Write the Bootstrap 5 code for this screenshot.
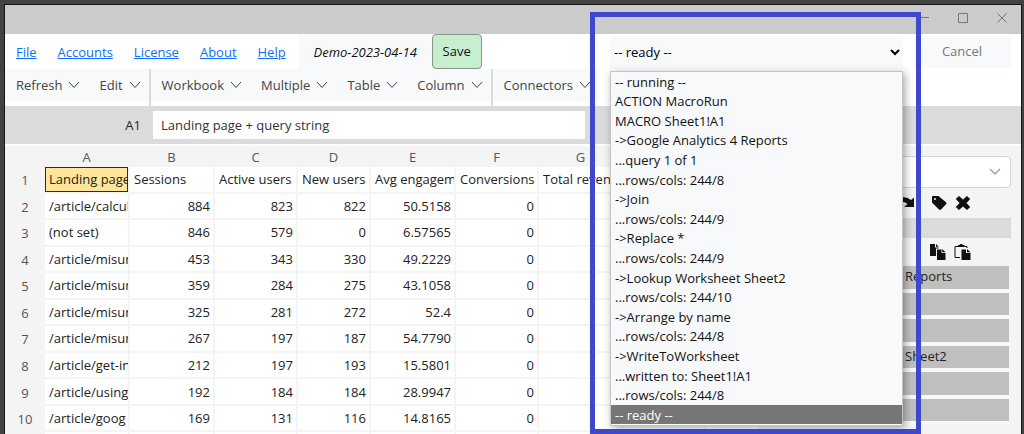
<!DOCTYPE html>
<html lang="en">
<head>
<meta charset="utf-8">
<meta name="viewport" content="width=device-width, initial-scale=1">
<title>Demo-2023-04-14</title>
<link rel="stylesheet" href="https://cdn.jsdelivr.net/npm/bootstrap@5.3.0/dist/css/bootstrap.min.css">
<style>
  body { background: #434240; font-family: "Open Sans", "Noto Sans", sans-serif; font-size: 13px; line-height: 20px; color: #222; height: 100vh; overflow: hidden; }
  .app-window { margin: 4px 2px 0 4px; border: 1px solid #161616; border-bottom: 0; background: #fff; height: calc(100vh - 4px); }
  .app-window > * { flex-shrink: 0; }
  .titlebar { height: 29px; background: #cbcbcb; padding: 0 14px 3px; gap: 29px; color: #777; }
  .topbar { height: 35px; }
  .topbar a { color: #0d6efd; }
  .menu-links { gap: 21px; padding: 0 13px 0 11px; }
  .doc-name { background: #f8f9fa; height: 35px; width: 133px; font-style: italic; color: #111; }
  .btn-save { width: 50px; height: 35px; font-size: 13px; padding: 0; background: #c6efce; border: 1px solid #8a938c; border-radius: 4px; color: #111; }
  .status-box { width: 293px; }
  .status-select { appearance: auto; width: 100%; height: 32px; border: 0; background: #f8f9fa; color: #000; padding: 0; font-size: 13px; }
  .status-menu { position: absolute; z-index: 5; top: 35px; left: 0; right: 0; height: 355px; background: #f8f9fa; border: 1px solid #c4c4c4; box-shadow: 2px 2px 8px rgba(0,0,0,.35); color: #111; line-height: 21px; }
  .status-menu li { flex: 1 1 0; min-height: 0; padding: 0 4px; }
  .status-menu .chosen { background: #767676; color: #fff; }
  .highlight-frame { position: absolute; z-index: 6; top: -24px; left: -20px; right: -18px; height: 422px; border: 5px solid #3f48cc; pointer-events: none; }
  .btn-cancel { width: 98px; height: 32px; font-size: 13px; padding: 0; border: 0; border-radius: 4px; background: #f8f9fa; color: #777; margin: 0 10px; }
  .toolbar { height: 37px; }
  .tool-group { padding-bottom: 5px; border-right: 2px solid #dbdbdb; }
  .tool-group:last-child { border: 0; }
  .tool-group button { border: 0; background: #f8f9fa; color: #444; padding: 0 8px 0 11px; gap: 6px; }
  .formula { height: 38px; background: #dbdbdb; padding: 5px 0; border: 0; }
  .formula label { width: 148px; padding-right: 12px; }
  .formula input { width: 432px; border: 0; padding: 0 8px; color: #333; }
  .workarea { background: #f4f4f4; border-top: 2px solid #fff; flex: 1 1 0; min-height: 0; }
  .sheet { table-layout: fixed; width: 755px; height: 313px; border-collapse: separate; border-spacing: 0; }
  .sheet th { font-weight: 400; text-align: center; color: #555; padding: 0; }
  .sheet thead th { height: 21px; padding-right: 2px; }
  .sheet tbody tr { height: 26px; }
  .sheet td { background: #fff; border: 0 solid #f4f4f4; border-width: 0 2px 2px 0; padding: 0 3px 0 4px; overflow: hidden; white-space: nowrap; text-align: right; }
  .sheet td.txt { text-align: left; padding-right: 0; }
  .sheet td.active-cell { background: #ffe699; background-clip: padding-box; box-shadow: inset 0 0 0 1px #1414e0; }
  .panel { padding: 10px 10px 0 0; }
  .panel-select { height: 32px; font-size: 13px; border: 1px solid #ced4da; border-radius: 4px; background-image: url("data:image/svg+xml,%3Csvg xmlns='http://www.w3.org/2000/svg' viewBox='0 0 12 12'%3E%3Cpath d='M1 3 6 8 11 3' fill='none' stroke='%23a0a4a8' stroke-width='1.500'/%3E%3C/svg%3E"); background-size: 12px; background-position: right 9px center; }
  .icon-row { height: 30px; padding-right: 40px; gap: 8px; }
  .icon-row.edit { height: 28px; }
  .icon-row button { border: 0; background: none; padding: 0; color: #111; line-height: 0; }
  .bar-strip { height: 20px; background: #dbdbdb; }
  .steps { height: 159px; padding-right: 2px; }
  .steps li { flex: 1 1 0; background: #bfbfbf; border-bottom: 4px solid #f8f8f8; padding-left: 145px; }
</style>
</head>
<body>
<div class="app-window d-flex flex-column">
  <div class="titlebar d-flex justify-content-end align-items-center">
    <svg width="10" height="10" viewBox="0 0 10 10" stroke="currentColor"><path d="M0 4.500H10"/></svg>
    <svg width="10" height="10" viewBox="0 0 10 10" stroke="currentColor" fill="none"><path d="M.5.500H9.500V9.500H.500Z"/></svg>
    <svg width="10" height="10" viewBox="0 0 10 10" stroke="currentColor"><path d="M.5.500 9.500 9.500M9.500.500.500 9.500"/></svg>
  </div>

  <header class="topbar d-flex align-items-center">
    <nav class="menu-links d-flex">
      <a href="#">File</a><a href="#">Accounts</a><a href="#">License</a><a href="#">About</a><a href="#">Help</a>
    </nav>
    <div class="doc-name d-flex align-items-center justify-content-center">Demo-2023-04-14</div>
    <button class="btn btn-save" type="button">Save</button>
    <div class="status-box position-relative ms-auto">
      <select class="status-select d-block" aria-label="Status"><option>-- ready --</option></select>
      <ul class="status-menu list-unstyled d-flex flex-column m-0">
        <li>-- running --</li>
        <li>ACTION MacroRun</li>
        <li>MACRO Sheet1!A1</li>
        <li>-&gt;Google Analytics 4 Reports</li>
        <li>...query 1 of 1</li>
        <li>...rows/cols: 244/8</li>
        <li>-&gt;Join</li>
        <li>...rows/cols: 244/9</li>
        <li>-&gt;Replace *</li>
        <li>...rows/cols: 244/9</li>
        <li>-&gt;Lookup Worksheet Sheet2</li>
        <li>...rows/cols: 244/10</li>
        <li>-&gt;Arrange by name</li>
        <li>...rows/cols: 244/8</li>
        <li>-&gt;WriteToWorksheet</li>
        <li>...written to: Sheet1!A1</li>
        <li>...rows/cols: 244/8</li>
        <li class="chosen">-- ready --</li>
      </ul>
      <div class="highlight-frame"></div>
    </div>
    <button class="btn btn-cancel" type="button">Cancel</button>
  </header>

  <div class="toolbar d-flex">
    <svg class="d-none"><symbol id="chev" viewBox="0 0 12 8"><path d="M1 1 6 6.500 11 1" fill="none" stroke="currentColor"/></symbol></svg>
    <div class="tool-group d-flex">
      <button class="d-flex align-items-center" type="button">Refresh<svg width="12" height="8"><use href="#chev"/></svg></button>
      <button class="d-flex align-items-center" type="button">Edit<svg width="12" height="8"><use href="#chev"/></svg></button>
    </div>
    <div class="tool-group d-flex">
      <button class="d-flex align-items-center" type="button">Workbook<svg width="12" height="8"><use href="#chev"/></svg></button>
      <button class="d-flex align-items-center" type="button">Multiple<svg width="12" height="8"><use href="#chev"/></svg></button>
      <button class="d-flex align-items-center" type="button">Table<svg width="12" height="8"><use href="#chev"/></svg></button>
      <button class="d-flex align-items-center" type="button">Column<svg width="12" height="8"><use href="#chev"/></svg></button>
    </div>
    <div class="tool-group d-flex">
      <button class="d-flex align-items-center" type="button">Connectors<svg width="12" height="8"><use href="#chev"/></svg></button>
    </div>
  </div>

  <div class="formula d-flex align-items-center">
    <label for="cell" class="text-end">A1</label>
    <input id="cell" class="h-100" type="text" value="Landing page + query string">
  </div>

  <main class="workarea d-flex overflow-hidden">
    <table class="sheet flex-shrink-0">
      <colgroup><col style="width:40px"><col style="width:85px"><col style="width:85px"><col style="width:83px"><col style="width:73px"><col style="width:85px"><col style="width:83px"><col style="width:85px"><col style="width:82px"><col></colgroup>
      <thead><tr><th></th><th>A</th><th>B</th><th>C</th><th>D</th><th>E</th><th>F</th><th>G</th><th></th><th></th></tr></thead>
      <tbody>
        <tr><th>1</th><td class="txt active-cell">Landing page</td><td class="txt">Sessions</td><td class="txt">Active users</td><td class="txt">New users</td><td class="txt">Avg engagement</td><td class="txt">Conversions</td><td class="txt">Total revenue</td><td></td><td></td></tr>
        <tr><th>2</th><td class="txt">/article/calculate</td><td>884</td><td>823</td><td>822</td><td>50.5158</td><td>0</td><td></td><td></td><td></td></tr>
        <tr><th>3</th><td class="txt">(not set)</td><td>846</td><td>579</td><td>0</td><td>6.57565</td><td>0</td><td></td><td></td><td></td></tr>
        <tr><th>4</th><td class="txt">/article/misunder</td><td>453</td><td>343</td><td>330</td><td>49.2229</td><td>0</td><td></td><td></td><td></td></tr>
        <tr><th>5</th><td class="txt">/article/misunder</td><td>359</td><td>284</td><td>275</td><td>43.1058</td><td>0</td><td></td><td></td><td></td></tr>
        <tr><th>6</th><td class="txt">/article/misunder</td><td>325</td><td>281</td><td>272</td><td>52.4</td><td>0</td><td></td><td></td><td></td></tr>
        <tr><th>7</th><td class="txt">/article/misunder</td><td>267</td><td>197</td><td>187</td><td>54.7790</td><td>0</td><td></td><td></td><td></td></tr>
        <tr><th>8</th><td class="txt">/article/get-in</td><td>212</td><td>197</td><td>193</td><td>15.5801</td><td>0</td><td></td><td></td><td></td></tr>
        <tr><th>9</th><td class="txt">/article/using</td><td>192</td><td>184</td><td>184</td><td>28.9947</td><td>0</td><td></td><td></td><td></td></tr>
        <tr><th>10</th><td class="txt">/article/goog</td><td>169</td><td>131</td><td>116</td><td>14.8165</td><td>0</td><td></td><td></td><td></td></tr>
        <tr><th></th><td></td><td></td><td></td><td></td><td></td><td></td><td></td><td></td><td></td></tr>
      </tbody>
    </table>
    <aside class="panel flex-grow-1">
      <select class="form-select panel-select" aria-label="Macro"><option></option></select>
      <div class="icon-row d-flex justify-content-end align-items-center">
        <button type="button" aria-label="Redo" class="me-2"><svg width="16" height="16" viewBox="0 0 16 16" fill="currentColor"><path d="M1 3Q7 1 12 5L15 2.500V12H5L8.500 9Q5 6 1 7Z"/></svg></button>
        <button type="button" aria-label="Tag"><svg width="16" height="16" viewBox="0 0 16 16" fill="currentColor" fill-rule="evenodd"><path d="M1 1.500Q1 1 1.500 1H7.500L15 7.200Q16 8.200 15 9.200L10 14.600Q9 15.500 8 14.600L1 7.500ZM4 3A1 1 0 1 0 4 5A1 1 0 1 0 4 3Z"/></svg></button>
        <button type="button" aria-label="Delete"><svg width="16" height="16" viewBox="0 0 16 16" fill="currentColor"><path d="M4 1 8 4.600 12 1 15.200 4 11.500 8 15.200 12 12 15 8 11.400 4 15 .8 12 4.500 8 .8 4Z"/></svg></button>
      </div>
      <div class="bar-strip"></div>
      <div class="icon-row edit d-flex justify-content-end align-items-center">
        <button type="button" aria-label="Copy"><svg width="16" height="16" viewBox="0 0 16 16" fill="currentColor"><path d="M0 0H5V3.500H8.500V4.500H6V12H0ZM6 0 8.800 2.800H6Z"/><path d="M7 5.500H11.500V9H15.500V16H7ZM12.300 5 15.500 8.200H12.300Z"/></svg></button>
        <button type="button" aria-label="Paste"><svg width="17" height="16" viewBox="0 0 17 16" fill="currentColor"><path d="M4 1H5.500L6.500 0H8L9 1H10.500V3H4Z"/><path d="M4 2.500H1V13.500H6M10.500 2.500H13V4" fill="none" stroke="currentColor"/><path d="M7.500 5.500H12V9H16.500V16H7.500ZM13 5 16.500 8.200H13Z"/></svg></button>
      </div>
      <ul class="steps list-unstyled d-flex flex-column m-0">
        <li>Reports</li>
        <li></li>
        <li></li>
        <li>Sheet2</li>
        <li></li>
        <li></li>
      </ul>
    </aside>
  </main>
</div>
<script src="https://cdn.jsdelivr.net/npm/bootstrap@5.3.0/dist/js/bootstrap.bundle.min.js"></script>
</body>
</html>
